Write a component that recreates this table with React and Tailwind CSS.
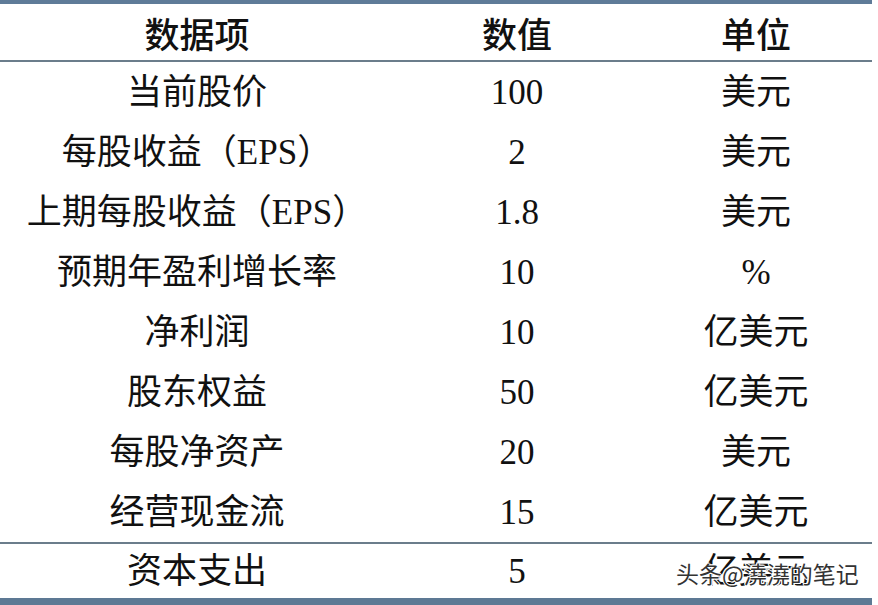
import React from "react";

// rows of the table
const rows = [
  ["当前股价", "100", "美元"],
  ["每股收益（EPS）", "2", "美元"],
  ["上期每股收益（EPS）", "1.8", "美元"],
  ["预期年盈利增长率", "10", "%"],
  ["净利润", "10", "亿美元"],
  ["股东权益", "50", "亿美元"],
  ["每股净资产", "20", "美元"],
  ["经营现金流", "15", "亿美元"],
];

const Row = ({ cells, h }) => (
  <div className={`grid grid-cols-[394px_246px_232px] items-center ${h}`}>
    {cells.map((c, i) => (
      <div key={i} className="text-center">{c}</div>
    ))}
  </div>
);

const App = () => {
  return (
    <div className="relative w-[878px] h-[605px] bg-white overflow-hidden">
      <div
        className="w-[872px] text-[35px] leading-none text-[#111]"
        style={{ fontFamily: '"Liberation Serif", "Noto Sans CJK SC", serif' }}
      >
        {/* top border */}
        <div className="h-[4px] bg-[#5f7b98]"></div>
        {/* header */}
        <div
          className="grid grid-cols-[394px_246px_232px] items-center h-[56px] font-medium"
          style={{ fontFamily: '"Noto Sans CJK SC", sans-serif' }}
        >
          <div className="text-center">数据项</div>
          <div className="text-center">数值</div>
          <div className="text-center">单位</div>
        </div>
        <div className="h-[2px] bg-[#6b7d8b]"></div>
        {rows.map((r, i) => (
          <Row key={i} cells={r} h="h-[60px]" />
        ))}
        <div className="h-[2px] bg-[#6b7d8b]"></div>
        <Row cells={["资本支出", "5", "亿美元"]} h="h-[54px]" />
        {/* bottom border */}
        <div className="h-[8px] bg-[#5d7994]"></div>
      </div>

      {/* watermark */}
      <div
        className="absolute left-[676px] top-[562px] text-[23px] leading-none text-[#333]"
        style={{
          fontFamily: '"Noto Sans CJK SC", sans-serif',
          textShadow:
            "1px 0 0 #fff, -1px 0 0 #fff, 0 1px 0 #fff, 0 -1px 0 #fff, 1px 1px 0 #fff, -1px -1px 0 #fff",
        }}
      >
        头条@澆澆的笔记
      </div>
    </div>
  );
};

export default App;
